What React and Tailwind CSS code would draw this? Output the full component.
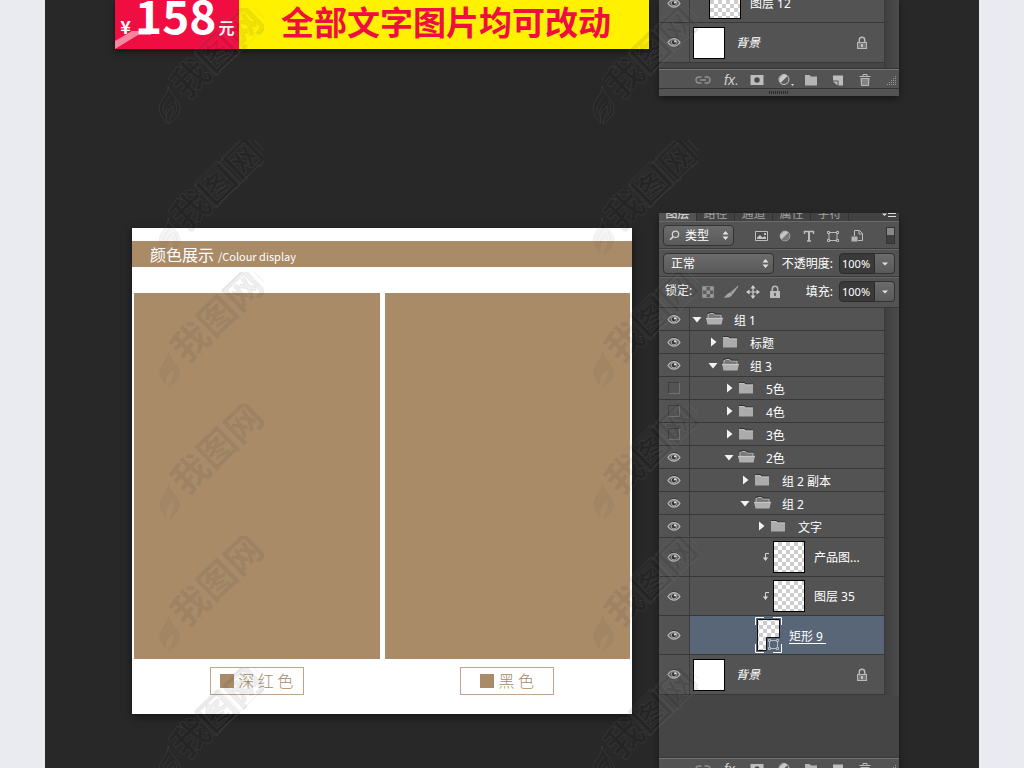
import { useState } from "react";

const PANEL_FONT = "font-['Noto_Sans','Noto_Sans_CJK_SC',sans-serif]";
const CHECKER =
  "bg-[conic-gradient(#ccc_25%,#fff_0_50%,#ccc_0_75%,#fff_0)] bg-[length:8px_8px]";

// left padding of a row for each nesting level
const INDENT = ["pl-[2px]", "pl-[18px]", "pl-[34px]", "pl-[50px]", "pl-[66px]"];

const tabs = ["图层", "路径", "通道", "属性", "字符"];

const mainLayers = [
  { type: "group", name: "组 1", level: 0, open: true, visible: true },
  { type: "group", name: "标题", level: 1, open: false, visible: true },
  { type: "group", name: "组 3", level: 1, open: true, visible: true },
  { type: "group", name: "5色", level: 2, open: false, visible: false },
  { type: "group", name: "4色", level: 2, open: false, visible: false },
  { type: "group", name: "3色", level: 2, open: false, visible: false },
  { type: "group", name: "2色", level: 2, open: true, visible: true },
  { type: "group", name: "组 2 副本", level: 3, open: false, visible: true },
  { type: "group", name: "组 2", level: 3, open: true, visible: true },
  { type: "group", name: "文字", level: 4, open: false, visible: true },
  { type: "clipped", name: "产品图...", visible: true },
  { type: "clipped", name: "图层 35", visible: true },
  { type: "shape", name: "矩形 9", visible: true },
  { type: "background", name: "背景", visible: true },
];

const topLayers = [
  { type: "layer", name: "图层 12", visible: true },
  { type: "background", name: "背景", visible: true },
];

// ----------------------------
// ICONS
// ----------------------------
function EyeIcon() {
  return (
    <svg width="14" height="11" viewBox="0 0 14 11">
      <path d="M1 4.800C3 1.400 5 .6 7 .6s4.200.8 6 4.200" fill="none" stroke="#333" strokeWidth="1" />
      <path d="M1 5.500C2.800 2.600 4.800 1.700 7 1.700s4.200.9 6 3.800c-1.800 2.600-3.800 3.600-6 3.600S2.800 8.100 1 5.500z" fill="#5c5c5c" stroke="#b9b9b9" strokeWidth="1.300" />
      <circle cx="7" cy="5.200" r="2.700" fill="#333" stroke="#a8a8a8" strokeWidth="1" />
      <circle cx="8" cy="4.400" r="1.100" fill="#e0e0e0" />
    </svg>
  );
}

function FolderIcon({ open }) {
  if (open) {
    return (
      <svg width="18" height="14" viewBox="0 0 18 14">
        <path d="M2 6V2.500h1l1-1h3.500l1 1.500H15V6" fill="#777" stroke="#b5b5b5" />
        <path d="M1.500 1.500l2-1H8L9 2h6.500" fill="none" stroke="#2f2f2f" strokeWidth=".8" />
        <path d="M0 6h17l-1.500 6.500h-14z" fill="#b0b0b0" />
        <path d="M0 6.400h17" stroke="#d0d0d0" strokeWidth=".8" />
      </svg>
    );
  }
  return (
    <svg width="18" height="14" viewBox="0 0 18 14">
      <path d="M1 1.500h5.500L8 3h7" fill="none" stroke="#2f2f2f" />
      <path d="M1 2h5.200l1.300 1.500H15v9H1z" fill="#acacac" />
      <path d="M1 2.500h5l1.300 1.500H15" fill="none" stroke="#c8c8c8" strokeWidth=".8" />
    </svg>
  );
}

function Disclosure({ open }) {
  return (
    <svg width="10" height="12" viewBox="0 0 10 12">
      {open ? <path d="M.5 4h9L5 9.500z" fill="#f2f2f2" /> : <path d="M3 1.500v9L8.500 6z" fill="#f2f2f2" />}
    </svg>
  );
}

function LockIcon({ solid }) {
  return (
    <svg width="12" height="14" viewBox="0 0 12 14">
      <path d="M3.300 6.500V4a2.700 2.700 0 0 1 5.400 0v2.500" fill="none" stroke="#b9b9b9" strokeWidth="1.500" />
      <rect x="1.500" y="6.500" width="9" height="6" fill={solid ? "#bdbdbd" : "#777"} stroke="#b9b9b9" />
      <path d="M6 8v3" stroke={solid ? "#444" : "#ddd"} strokeWidth="1.400" />
    </svg>
  );
}

function ClipArrow() {
  return (
    <svg width="8" height="10" viewBox="0 0 8 10">
      <path d="M7 1.500H3.500V7" fill="none" stroke="#d5d5d5" />
      <path d="M.8 5.500h5.400L3.500 9z" fill="#d5d5d5" />
    </svg>
  );
}

function UpDown() {
  return (
    <svg width="7" height="9" viewBox="0 0 7 9" className="pointer-events-none absolute right-1 top-[5px]">
      <path d="M3.500 0L6.500 3.500H.5zM3.500 9L.5 5.500h6z" fill="#e2e2e2" />
    </svg>
  );
}

// ----------------------------
// LAYER LIST
// ----------------------------
function EyeCell({ visible, onToggle }) {
  return (
    <div className="flex w-[31px] shrink-0 items-center justify-center border-r border-[#3c3c3c]">
      <button onClick={onToggle} aria-label="显示图层" aria-pressed={visible} className="flex">
        {visible ? (
          <EyeIcon />
        ) : (
          <span className="h-3 w-3 border border-b-[#707070] border-l-[#3e3e3e] border-r-[#707070] border-t-[#3e3e3e]" />
        )}
      </button>
    </div>
  );
}

function LayerContent({ layer }) {
  if (layer.type === "group") {
    return (
      <div className={`flex flex-1 items-center ${INDENT[layer.level]}`}>
        <Disclosure open={layer.open} />
        <span className="ml-1">
          <FolderIcon open={layer.open} />
        </span>
        <span className="ml-[10px] pt-[3px]">{layer.name}</span>
      </div>
    );
  }

  if (layer.type === "shape") {
    return (
      <div className="flex flex-1 items-center bg-[#596678] pl-[65px]">
        <svg width="27" height="36" viewBox="0 0 27 36">
          <defs>
            <pattern id="cells" width="8" height="8" patternUnits="userSpaceOnUse">
              <path d="M0 0h8v8H0z" fill="#fff" />
              <path d="M4 0h4v4H4zM0 4h4v4H0z" fill="#ccc" />
            </pattern>
          </defs>
          <path d="M2.500 2.500h22v18h-13v13h-9z" fill="url(#cells)" stroke="#111" />
          <path d="M.5 8V.5H9M18 .5h8.500V8M.5 27v8.500H9M18 35.500h8.500V27" fill="none" stroke="#fff" />
          <path d="M14.500 23.500h8v8h-8z" fill="none" stroke="#b5bdc8" />
          <path d="M13.500 22.500h2v2h-2zM21.500 22.500h2v2h-2zM13.500 30.500h2v2h-2zM21.500 30.500h2v2h-2z" fill="#596678" stroke="#b5bdc8" />
        </svg>
        <span className="ml-[7px] pt-[3px] underline underline-offset-2">{layer.name}&nbsp;</span>
      </div>
    );
  }

  if (layer.type === "background") {
    return (
      <div className="flex flex-1 items-center pl-[3px] pr-4">
        <span className="h-8 w-8 border border-black bg-white" />
        <span className="ml-[11px] flex-1 italic">{layer.name}</span>
        <LockIcon />
      </div>
    );
  }

  return (
    <div className={`flex flex-1 items-center ${layer.type === "clipped" ? "pl-[72px]" : "pl-[19px]"}`}>
      {layer.type === "clipped" && (
        <span className="mr-[3px]">
          <ClipArrow />
        </span>
      )}
      <span className={`h-8 w-8 border border-black ${CHECKER}`} />
      <span className="ml-[9px] pt-[2px]">{layer.name}</span>
    </div>
  );
}

function LayerList({ initial, className }) {
  const [layers, setLayers] = useState(initial);

  function toggle(index) {
    setLayers(layers.map((l, i) => (i === index ? { ...l, visible: !l.visible } : l)));
  }

  return (
    <div className={`flex bg-[#454545] ${className}`}>
      <ul className="flex-1">
        {layers.map((layer, index) => (
          <li
            key={layer.name}
            className={`flex border-b border-[#383838] bg-[#535353] ${
              layer.type === "group" ? "h-[23px]" : layer.type === "background" ? "h-10" : "h-[39px]"
            }`}
          >
            <EyeCell visible={layer.visible} onToggle={() => toggle(index)} />
            <LayerContent layer={layer} />
          </li>
        ))}
      </ul>
      <div className="w-[15px] border-l border-[#3a3a3a] bg-linear-to-r from-[#404040] to-[#4b4b4b]" />
    </div>
  );
}

// ----------------------------
// PANEL PARTS
// ----------------------------
function PanelTabs() {
  return (
    <div className="flex h-2 items-end overflow-hidden bg-[#424242]">
      {tabs.map((tab, i) => (
        <button
          key={tab}
          className={`w-[38px] shrink-0 border-r border-[#333] text-center leading-[14px] ${
            i === 0 ? "bg-[#535353] text-[#e4e4e4]" : "text-[#a2a2a2]"
          }`}
        >
          {tab}
        </button>
      ))}
      <svg width="14" height="8" viewBox="0 0 14 8" className="ml-auto mr-[3px]">
        <path d="M0 .5h5L2.500 3z" fill="#ddd" />
        <path d="M6 .5h8M6 3.500h8" stroke="#ddd" />
      </svg>
    </div>
  );
}

function FilterRow() {
  return (
    <div className="flex h-7 items-center border-t border-[#6a6a6a] px-1">
      <div className="relative flex h-[21px] w-[71px] items-center rounded-sm border border-[#333] bg-linear-to-b from-[#6b6b6b] to-[#5a5a5a]">
        <svg width="11" height="11" viewBox="0 0 11 11" className="pointer-events-none absolute left-[5px]">
          <circle cx="6.500" cy="4.300" r="3.200" fill="none" stroke="#d5d5d5" strokeWidth="1.200" />
          <path d="M4.200 6.600L1 9.800" stroke="#d5d5d5" strokeWidth="1.600" />
        </svg>
        <select aria-label="类型" className="h-full w-full appearance-none pl-[21px] outline-none">
          <option>类型</option>
        </select>
        <UpDown />
      </div>
      <div className="ml-5 flex gap-[10px]">
        <button aria-label="像素图层">
          <svg width="14" height="14" viewBox="0 0 14 14">
            <path d="M1.500 2.500h12v9h-12z" fill="#4c4c4c" stroke="#bdbdbd" />
            <path d="M3 10V8.500L6 6l2.500 2.500L10.500 7l1.500 1.500V10z" fill="#c4c4c4" />
            <path d="M10 4h2v2h-2z" fill="#c4c4c4" />
          </svg>
        </button>
        <button aria-label="调整图层">
          <svg width="14" height="14" viewBox="0 0 14 14">
            <circle cx="7" cy="7" r="4.800" fill="#4e4e4e" stroke="#bdbdbd" />
            <path d="M10.500 3.500A5 5 0 0 1 3.500 10.500z" fill="#777" />
            <path d="M10.500 3.500A5 5 0 0 0 3.500 10.500z" fill="#c4c4c4" />
          </svg>
        </button>
        <button aria-label="文字图层">
          <svg width="14" height="14" viewBox="0 0 14 14">
            <path d="M2.500 5V2.500h9V5M5 12h4" fill="none" stroke="#bdbdbd" strokeWidth="1.400" />
            <path d="M7 2.500V12" stroke="#bdbdbd" strokeWidth="2" />
          </svg>
        </button>
        <button aria-label="形状图层">
          <svg width="14" height="14" viewBox="0 0 14 14">
            <path d="M3 3.500h8v8H3z" fill="none" stroke="#bdbdbd" />
            <path d="M1.500 2.500h2v2h-2zM10.500 2.500h2v2h-2zM1.500 10.500h2v2h-2zM10.500 10.500h2v2h-2z" fill="#535353" stroke="#bdbdbd" />
          </svg>
        </button>
        <button aria-label="智能对象">
          <svg width="14" height="14" viewBox="0 0 14 14">
            <path d="M4.500 7V1.500h5l3 3v7H8" fill="none" stroke="#bdbdbd" />
            <path d="M9 1.500V5h3.500" fill="none" stroke="#bdbdbd" />
            <path d="M1.500 7.500h6v5h-6z" fill="#b5b5b5" />
          </svg>
        </button>
      </div>
      <button
        aria-label="图层过滤"
        className="ml-auto flex h-[17px] w-[9px] items-start border border-[#333] bg-[#3f3f3f]"
      >
        <span className="h-[7px] w-full bg-[#888]" />
      </button>
    </div>
  );
}

function PercentField({ id, label }) {
  return (
    <div className="ml-auto flex items-center">
      <label htmlFor={id} className="mr-[6px]">
        {label}
      </label>
      <input
        id={id}
        defaultValue="100%"
        className="h-[21px] w-9 rounded-l-sm border border-[#2c2c2c] bg-[#3a3a3a] pl-[2px] text-[11px] outline-none"
      />
      <button
        aria-label="调整数值"
        className="flex h-[21px] w-5 items-center justify-center rounded-r-sm border border-l-0 border-[#333] bg-linear-to-b from-[#6b6b6b] to-[#5a5a5a]"
      >
        <svg width="6" height="4" viewBox="0 0 6 4">
          <path d="M0 .5h6L3 3.500z" fill="#e2e2e2" />
        </svg>
      </button>
    </div>
  );
}

function BlendRow() {
  return (
    <div className="flex h-7 items-center border-t border-[#666] px-1 shadow-[0_-1px_0_#3b3b3b]">
      <div className="relative h-[21px] w-[111px] rounded-sm border border-[#333] bg-linear-to-b from-[#6b6b6b] to-[#5a5a5a]">
        <select aria-label="混合模式" className="h-full w-full appearance-none pl-[7px] outline-none">
          <option>正常</option>
        </select>
        <UpDown />
      </div>
      <PercentField id="opacity" label="不透明度:" />
    </div>
  );
}

function LockRow() {
  return (
    <div className="flex h-[30px] items-start border-t border-[#666] px-1 pt-[3px] shadow-[0_-1px_0_#3b3b3b]">
      <span className="ml-[2px] pt-[2px]">锁定:</span>
      <div className="ml-[9px] flex gap-2 pt-1">
        <button aria-label="锁定透明像素">
          <svg width="14" height="14" viewBox="0 0 14 14">
            <path d="M1.500 1.500h11v11h-11z" fill="#5c5c5c" stroke="#858585" />
            <path d="M2 2h3.500v3.500H2zM9 2h3.500v3.500H9zM5.500 5.500H9V9H5.500zM2 9h3.500v3.500H2zM9 9h3.500v3.500H9z" fill="#999" />
          </svg>
        </button>
        <button aria-label="锁定图像像素">
          <svg width="16" height="14" viewBox="0 0 16 14">
            <path d="M15 1L8 7.500 9.500 9z" fill="#a5a5a5" stroke="#a5a5a5" />
            <path d="M7.500 7.500L9.500 9.500C8 12.500 4 13 .5 12.500 3 11.500 4 8 7.500 7.500z" fill="#a5a5a5" />
          </svg>
        </button>
        <button aria-label="锁定位置" className="-ml-px">
          <svg width="14" height="14" viewBox="0 0 14 14">
            <path d="M7 2v10M2 7h10" stroke="#cfcfcf" strokeWidth="1.200" />
            <path d="M7 0l2.500 3.500h-5zM7 14l2.500-3.500h-5zM0 7l3.500-2.500v5zM14 7l-3.500-2.500v5z" fill="#cfcfcf" />
          </svg>
        </button>
        <button aria-label="锁定全部" className="ml-px">
          <LockIcon solid />
        </button>
      </div>
      <PercentField id="fill" label="填充:" />
    </div>
  );
}

function PanelFooter() {
  return (
    <div className="shrink-0 bg-[#535353]">
      <div className="flex h-[19px] items-center border-t border-t-[#757575] pl-9">
        <div className="flex flex-1 gap-[11px] pt-px">
          <button aria-label="链接图层">
            <svg width="16" height="14" viewBox="0 0 16 14">
              <path d="M6.500 4H4a3 3 0 0 0 0 6h2.500M9.500 4H12a3 3 0 0 1 0 6H9.500M5 7h6" fill="none" stroke="#919191" strokeWidth="1.400" />
            </svg>
          </button>
          <button
            aria-label="图层样式"
            className="w-[17px] pl-[2px] text-left font-['Liberation_Sans',sans-serif] text-sm italic leading-[14px] text-[#d0d0d0]"
          >
            fx.
          </button>
          <button aria-label="图层蒙版" className="w-4">
            <svg width="14" height="14" viewBox="0 0 14 14">
              <path d="M.5 2h13v10H.5z" fill="#bdbdbd" />
              <circle cx="7" cy="7" r="2.700" fill="#484848" />
            </svg>
          </button>
          <button aria-label="调整图层">
            <svg width="17" height="14" viewBox="0 0 17 14">
              <circle cx="7" cy="6.500" r="5" fill="#5c5c5c" stroke="#c4c4c4" />
              <path d="M10.500 3A5 5 0 0 0 3.500 10z" fill="#c9c9c9" />
              <path d="M14 11h3l-1.500 2z" fill="#ddd" />
            </svg>
          </button>
          <button aria-label="新建组" className="-ml-px">
            <svg width="14" height="14" viewBox="0 0 14 14">
              <path d="M1 2h4.500L7 3.500h6v9H1z" fill="#b5b5b5" />
            </svg>
          </button>
          <button aria-label="新建图层" className="ml-[3px]">
            <svg width="12" height="14" viewBox="0 0 12 14">
              <path d="M1 2.500h10v10H6.500v-5H1z" fill="#bdbdbd" />
              <path d="M1 8.500h4.500v4z" fill="#bdbdbd" />
            </svg>
          </button>
          <button aria-label="删除图层" className="ml-1">
            <svg width="12" height="14" viewBox="0 0 12 14">
              <path d="M.5 3.500h11M4 3V1.500h4V3" fill="none" stroke="#bdbdbd" />
              <path d="M1.500 5h9L10 13H2z" fill="#b5b5b5" />
              <path d="M4 6v6M6 6v6M8 6v6" stroke="#555" />
            </svg>
          </button>
        </div>
        <svg width="10" height="10" viewBox="0 0 10 10" className="mr-[2px] mt-1">
          <path d="M8 .5h1M6 2.500h3M4 4.500h5M2 6.500h7M0 8.500h9" stroke="#999" strokeDasharray="1 1" />
        </svg>
      </div>
      <div className="flex h-2 items-start justify-center border-t border-[#333] pt-[2px]">
        <svg width="20" height="3" viewBox="0 0 20 3">
          <path d="M0 1.500h20" stroke="#2c2c2c" strokeWidth="3" strokeDasharray="1 1" />
        </svg>
      </div>
    </div>
  );
}

// ----------------------------
// LEFT SIDE CONTENT
// ----------------------------
function Banner() {
  return (
    <div className="flex h-[49px] flex-1 bg-[#fff100] font-['Noto_Sans_CJK_SC',sans-serif] font-bold shadow-[0_3px_6px_rgba(0,0,0,0.5)]">
      <div className="relative flex w-[124px] shrink-0 bg-[#f00d42] pl-[2px] text-white">
        <svg width="40" height="20" viewBox="0 0 40 20" className="absolute bottom-0 left-0">
          <path d="M0 12L17 2h19v4H23L0 20z" fill="#fff" fillOpacity=".5" />
        </svg>
        <div className="relative flex h-9 items-end whitespace-nowrap">
          <span className="w-[17px] text-center text-lg leading-5">¥</span>
          <span className="ml-px text-[46px] leading-[44px]">158</span>
          <span className="ml-[2px] text-base leading-[18px]">元</span>
        </div>
      </div>
      <p className="flex-1 pl-[42px] text-[33px] leading-[42px] text-[#f00d42]">全部文字图片均可改动</p>
    </div>
  );
}

function Swatch({ name }) {
  return (
    <div className="flex flex-1 flex-col items-center">
      <div className="h-[366px] w-full bg-[#a98b68]" />
      <div className="mt-2 flex h-7 w-[94px] items-center justify-center gap-1 border border-[#bfa58b] text-base leading-6 text-[#a98b68]">
        <span className="size-[14px] bg-[#a98b68]" />
        <span className="pb-[2px] font-light">{name}</span>
      </div>
    </div>
  );
}

function ColourCard() {
  return (
    <div className="ml-[17px] mt-[15px] h-[486px] flex-1 bg-white pt-[13px] font-['Noto_Sans_CJK_SC',sans-serif] shadow-[0_3px_8px_rgba(0,0,0,0.5)]">
      <h2 className="flex h-[26px] items-baseline gap-1 bg-[#a98b68] pl-[18px] text-base leading-[26px] text-white">
        颜色展示 <span className="text-[11px]">/Colour display</span>
      </h2>
      <div className="mt-[26px] flex gap-[5px] px-[2px]">
        <Swatch name="深 红 色" />
        <Swatch name="黑 色" />
      </div>
    </div>
  );
}

function Watermark() {
  return (
    <svg width="106" height="116" viewBox="0 0 106 116">
      <g fill="#000" fillOpacity=".04" stroke="#999" strokeOpacity=".13" strokeWidth="1">
        <path d="M10 78C12 88 23 92 22 102 21 109 15 112 11 116 11 110 17 106 15 98 9 102 7 108 9 115 2 108-1 101 3 94 6 88 10 86 10 78z" />
        <path d="M12 88C8 94 4 97 5 105M14 94C9 98 7 102 7 108M16 92C20 98 19 104 15 109" fill="none" />
        <g transform="translate(59 45) rotate(-44)">
          <path d="M-17-15h75v30h-75zM18-15v30" fill="none" />
          <text
            x="-55"
            y="13"
            fontSize="37"
            fillOpacity=".08"
            className="font-['Noto_Sans_CJK_SC',sans-serif] font-bold"
          >
            我图网
          </text>
        </g>
      </g>
    </svg>
  );
}

function WatermarkColumn() {
  return (
    <div className="flex flex-col gap-4">
      {[0, 1, 2, 3, 4, 5].map((n) => (
        <Watermark key={n} />
      ))}
    </div>
  );
}

export default function App() {
  return (
    <div className="h-screen overflow-hidden bg-[#e9ebf0]">
      <main
        className={`relative mx-[45px] h-full overflow-hidden bg-[#282828] pl-[70px] pr-20 text-xs text-white ${PANEL_FONT}`}
      >
        {/* Price banner and the end of its layer panel */}
        <section className="flex h-24 gap-[10px]">
          <Banner />
          <div className="flex w-60 shrink-0 flex-col justify-end overflow-hidden shadow-[0_3px_6px_rgba(0,0,0,0.4)]">
            <LayerList initial={topLayers} className="h-[85px] shrink-0 border-b border-[#333]" />
            <PanelFooter />
          </div>
        </section>

        {/* Colour card with the full layer panel */}
        <section className="mt-[117px] flex items-start gap-[27px]">
          <ColourCard />
          <div className="w-60 shrink-0 bg-[#535353] shadow-[0_3px_6px_rgba(0,0,0,0.4)]">
            <PanelTabs />
            <FilterRow />
            <BlendRow />
            <LockRow />
            <LayerList initial={mainLayers} className="border-b border-t border-[#383838] pb-[62px]" />
            <PanelFooter />
          </div>
        </section>

        {/* Watermarks over everything */}
        <div className="pointer-events-none absolute left-[113px] right-[281px] top-2 flex justify-between">
          <WatermarkColumn />
          <WatermarkColumn />
        </div>
      </main>
    </div>
  );
}
